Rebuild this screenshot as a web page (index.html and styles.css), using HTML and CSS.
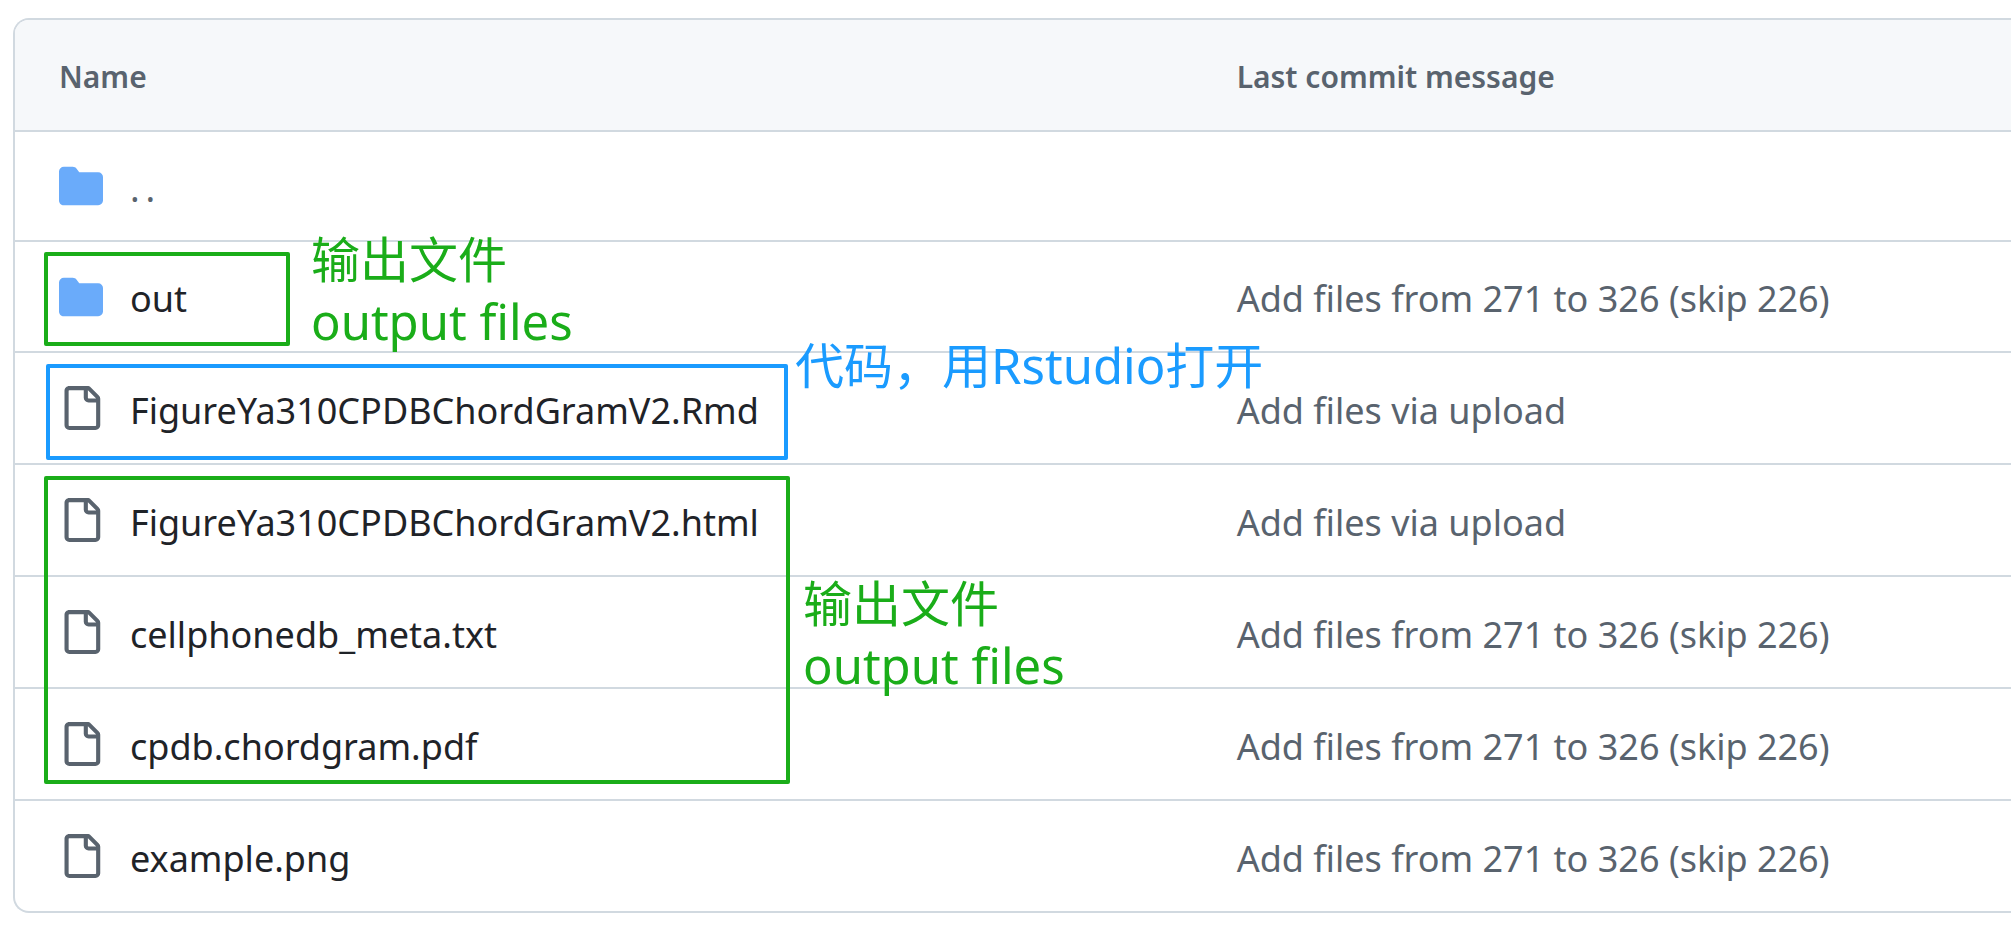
FILE: index.html
```html
<!DOCTYPE html>
<html lang="en">
<head>
<meta charset="utf-8">
<title>Repository files</title>
<link rel="stylesheet" href="styles.css">
</head>
<body>
<svg class="sprite" aria-hidden="true">
  <symbol id="folder" viewBox="0 0 16 16"><path d="M1.75 1A1.75 1.75 0 0 0 0 2.75v10.5C0 14.216.784 15 1.75 15h12.5A1.75 1.75 0 0 0 16 13.25v-8.5A1.75 1.75 0 0 0 14.25 3H7.5a.25.25 0 0 1-.2-.1l-.9-1.2C6.07 1.26 5.55 1 5 1H1.75Z"/></symbol>
  <symbol id="file" viewBox="0 0 16 16"><path d="M2 1.75C2 .784 2.784 0 3.75 0h6.586c.464 0 .909.184 1.237.513l2.914 2.914c.329.328.513.773.513 1.237v9.586A1.75 1.75 0 0 1 13.25 16h-9.5A1.75 1.75 0 0 1 2 14.25Zm1.75-.25a.25.25 0 0 0-.25.25v12.5c0 .138.112.25.25.25h9.5a.25.25 0 0 0 .25-.25V6h-2.75A1.75 1.75 0 0 1 9 4.25V1.5Zm6.75.062V4.25c0 .138.112.25.25.25h2.688l-.011-.013-2.914-2.914-.013-.011Z"/></symbol>
</svg>
<main class="browser">
  <table class="files">
    <thead>
      <tr><th class="name" scope="col">Name</th><th scope="col">Last commit message</th></tr>
    </thead>
    <tbody>
      <tr class="directory up"><td><a class="entry parent" href="#"><svg class="icon" aria-hidden="true"><use href="#folder"/></svg><span class="label">.&thinsp;.</span></a></td><td></td></tr>
      <tr class="directory"><td><a class="entry" href="#"><svg class="icon" aria-hidden="true"><use href="#folder"/></svg><span class="label">out</span></a></td><td><a class="commit label" href="#">Add files from 271 to 326 (skip 226)</a></td></tr>
      <tr><td><a class="entry" href="#"><svg class="icon" aria-hidden="true"><use href="#file"/></svg><span class="label">FigureYa310CPDBChordGramV2.Rmd</span></a></td><td><a class="commit label" href="#">Add files via upload</a></td></tr>
      <tr><td><a class="entry" href="#"><svg class="icon" aria-hidden="true"><use href="#file"/></svg><span class="label">FigureYa310CPDBChordGramV2.html</span></a></td><td><a class="commit label" href="#">Add files via upload</a></td></tr>
      <tr><td><a class="entry" href="#"><svg class="icon" aria-hidden="true"><use href="#file"/></svg><span class="label">cellphonedb_meta.txt</span></a></td><td><a class="commit label" href="#">Add files from 271 to 326 (skip 226)</a></td></tr>
      <tr><td><a class="entry" href="#"><svg class="icon" aria-hidden="true"><use href="#file"/></svg><span class="label">cpdb.chordgram.pdf</span></a></td><td><a class="commit label" href="#">Add files from 271 to 326 (skip 226)</a></td></tr>
      <tr><td><a class="entry" href="#"><svg class="icon" aria-hidden="true"><use href="#file"/></svg><span class="label">example.png</span></a></td><td><a class="commit label" href="#">Add files from 271 to 326 (skip 226)</a></td></tr>
    </tbody>
  </table>
  <div class="frame frame-out"></div>
  <div class="frame frame-code"></div>
  <div class="frame frame-results"></div>
  <p class="note note-out"><span lang="zh">输出文件</span><br>output files</p>
  <p class="note note-code" lang="zh">代码，用Rstudio打开</p>
  <p class="note note-results"><span lang="zh">输出文件</span><br>output files</p>
</main>
</body>
</html>
```

FILE: styles.css
```css
* { box-sizing: border-box; }

body {
  margin: 0;
  background: #fff;
  color: #1f2328;
  font: 36px/48px "Noto Sans", "Noto Sans CJK SC", sans-serif;
}

.sprite { position: absolute; width: 0; height: 0; }

.browser {
  position: relative;
  padding: 18px 0 15px 13px;
  overflow: hidden;
}

.files {
  width: 100%;
  table-layout: fixed;
  border: 2px solid #d1d9e0;
  border-right: 0;
  border-radius: 16px 0 0 16px;
  border-spacing: 0;
  overflow: hidden;
}

th, td {
  height: 112px;
  padding: 0 0 0 44px;
  border-bottom: 2px solid #d1d9e0;
  text-align: left;
  vertical-align: middle;
}

th {
  padding-top: 4px;
  background: #f6f8fa;
  color: #59636e;
  font-size: 30px;
  font-weight: 600;
}

th.name { width: 59%; }
.directory td { height: 111px; }
.up td,
tbody tr:last-child td { height: 110px; }
tbody tr:last-child td { border-bottom: 0; }

a { color: inherit; text-decoration: none; }

.entry {
  display: flex;
  align-items: center;
  gap: 27px;
}

.label { display: block; padding-top: 5px; }

.icon {
  flex: none;
  width: 44px;
  height: 44px;
  fill: #59636e;
}

.directory .icon { fill: #6aabfa; }
.parent, .commit { color: #59636e; }

/* Hand-drawn annotations over the listing */
.frame { position: absolute; border: 4px solid #1aad19; border-radius: 2px; pointer-events: none; }
.frame-out { left: 44px; top: 252px; width: 246px; height: 94px; }
.frame-code { left: 46px; top: 364px; width: 742px; height: 96px; border-color: #1a9bff; }
.frame-results { left: 44px; top: 476px; width: 746px; height: 308px; }

.note {
  position: absolute;
  margin: 0;
  color: #1aad19;
  font-size: 49px;
  line-height: 62px;
  white-space: nowrap;
}

.note-out { left: 311px; top: 228px; }
.note-code { left: 795px; top: 334px; color: #1a9bff; }
.note-results { left: 803px; top: 572px; }
```
